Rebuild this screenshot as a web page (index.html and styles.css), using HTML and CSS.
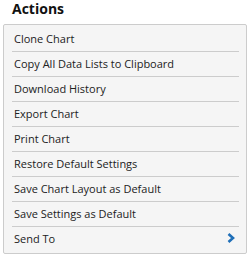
FILE: index.html
```html
<!DOCTYPE html>
<html lang="en">
<head>
  <meta charset="UTF-8">
  <title>Actions</title>
  <link rel="stylesheet" href="styles.css">
</head>
<body>
  <h2 class="title">Actions</h2>
  <ul class="menu">
    <li class="item">Clone Chart</li>
    <li class="item">Copy All Data Lists to Clipboard</li>
    <li class="item">Download History</li>
    <li class="item">Export Chart</li>
    <li class="item">Print Chart</li>
    <li class="item">Restore Default Settings</li>
    <li class="item">Save Chart Layout as Default</li>
    <li class="item">Save Settings as Default</li>
    <li class="item sub">Send To
      <svg class="chev" width="8" height="10" viewBox="0 0 8 10"><path d="M1.5 1 L6 5 L1.5 9" fill="none" stroke="#1f6fb8" stroke-width="2.6"/></svg>
    </li>
  </ul>
</body>
</html>
```

FILE: styles.css
```css
body {
  margin: 0;
  padding: 0 3px;
  font-family: "Open Sans", sans-serif;
  color: #222;
  background: #fff;
}
.title {
  margin: 0;
  padding-left: 9px;
  font-size: 14px;
  font-weight: bold;
  line-height: 18px;
  height: 24px;
  color: #111;
}
.menu {
  list-style: none;
  margin: 0;
  padding: 2px 7px 1px 8px;
  width: 227px;
  background: #f5f5f5;
  border: 1px solid #ccc;
  border-radius: 2px;
}
.item {
  display: flex;
  align-items: center;
  justify-content: space-between;
  height: 22px;
  padding: 0 4px 2px 2px;
  font-size: 11px;
  line-height: 15px;
  border-bottom: 1px solid #ccc;
}
.item:last-child {
  border-bottom: none;
  padding-bottom: 3px;
}
.chev {
  display: block;
}
```
